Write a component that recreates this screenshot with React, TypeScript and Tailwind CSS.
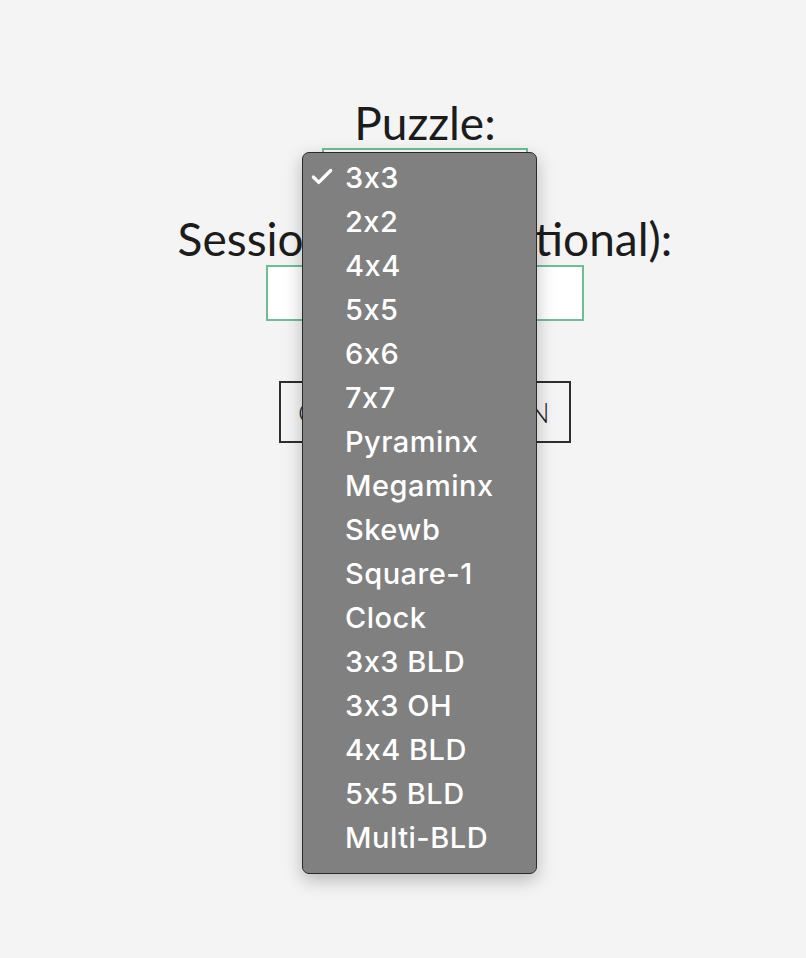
import { Check } from 'lucide-react'

const puzzles = [
  '3x3',
  '2x2',
  '4x4',
  '5x5',
  '6x6',
  '7x7',
  'Pyraminx',
  'Megaminx',
  'Skewb',
  'Square-1',
  'Clock',
  '3x3 BLD',
  '3x3 OH',
  '4x4 BLD',
  '5x5 BLD',
  'Multi-BLD',
]

export default function App() {
  return (
    <div className="relative min-h-[958px] w-full bg-[#f4f4f4] text-[#1c1c1c]" style={{ fontFamily: 'Lato, sans-serif' }}>
      <div className="flex flex-col items-center pl-[44px] pt-[100px]">
        <label className="text-[46px] leading-[46px]">Puzzle:</label>
        <div className="mt-[2px] h-[46px] w-[206px] border-2 border-[#6cbf95] bg-white" />
        <label className="mt-[22px] text-[46px] leading-[46px]">Session Name (optional):</label>
        <input className="mt-[3px] h-[56px] w-[318px] border-2 border-[#6cbf95] bg-white outline-none" />
        <button className="mt-[60px] h-[62px] w-[292px] border-2 border-[#2e2e2e] text-[28px] font-light tracking-[2.4px] text-[#1c1c1c]">
          CREATE SESSION
        </button>
      </div>

      {/* open select menu */}
      <div className="absolute left-[302px] top-[152px] w-[235px] rounded-[7px] border border-[#2b2b2b] bg-[#808080] pb-[14px] pt-[2px] shadow-[0_6px_18px_rgba(0,0,0,0.25)]">
        {puzzles.map((p, i) => (
          <div
            key={p}
            className="flex h-[44px] items-center text-white [font-feature-settings:'calt'_0]"
            style={{ fontFamily: 'Inter, sans-serif' }}
          >
            <span className="flex w-[42px] items-center pl-[6px]">
              {i === 0 && <Check size={26} strokeWidth={3} />}
            </span>
            <span className="text-[29px] font-medium leading-none tracking-[0.5px]">{p}</span>
          </div>
        ))}
      </div>
    </div>
  )
}
